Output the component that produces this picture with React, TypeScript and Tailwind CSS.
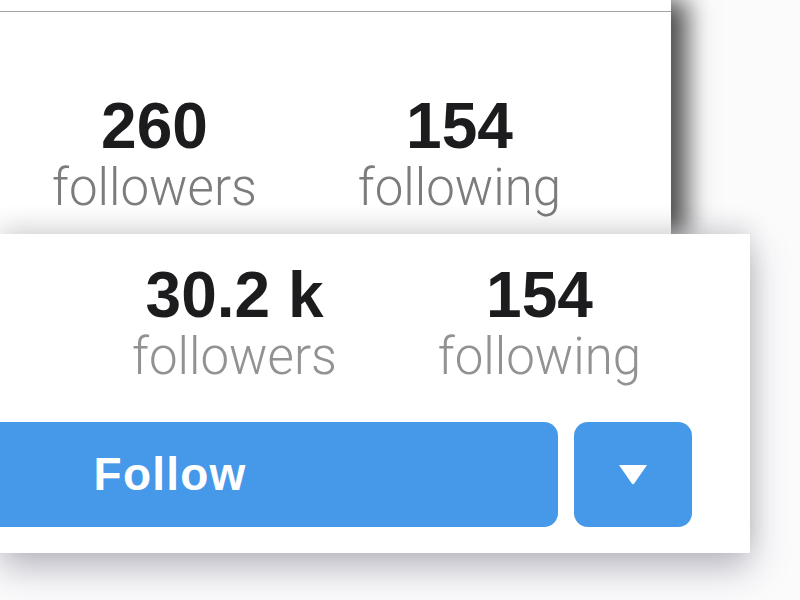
import React from "react";

type Stat = { value: string; label: string };

function StatColumn({ value, label, top }: Stat & { top?: boolean }) {
  return (
    <div className="w-[305px] flex flex-col items-center">
      <div
        className="text-[64px] leading-none font-bold text-[#1c1c1e] whitespace-pre"
        style={{ fontFamily: '"Liberation Sans", Arial, sans-serif' }}
      >
        {value}
      </div>
      <div
        className={
          "text-[51px] leading-none font-light mt-[4px] " +
          (top ? "text-[#7c7c7c]" : "text-[#929292]")
        }
        style={{ fontFamily: "Roboto, sans-serif" }}
      >
        {label}
      </div>
    </div>
  );
}

function CaretDown() {
  return (
    <svg width="30" height="21" viewBox="0 0 30 21" aria-hidden="true">
      <path d="M1 1 H29 L16.2 19.6 Q15 21 13.8 19.6 Z" fill="#ffffff" />
    </svg>
  );
}

export default function App() {
  return (
    <div className="w-[800px] h-[600px] overflow-hidden bg-[#fbfbfc]">
      {/* profile card behind */}
      <div className="w-[671px] h-[234px] bg-white shadow-[16px_0_24px_rgba(0,0,0,0.7)]">
        <div className="h-[12px] border-b border-[#a3a3a3]" />
        <div className="flex pl-[2px] pt-[82px]">
          <StatColumn value="260" label="followers" top />
          <StatColumn value="154" label="following" top />
        </div>
      </div>

      {/* profile card in front */}
      <div className="relative z-10 w-[750px] h-[319px] bg-white shadow-[0_14px_34px_rgba(50,40,70,0.34),0_-10px_22px_rgba(0,0,0,0.09)]">
        <div className="flex pl-[82px] pt-[29px]">
          <StatColumn value="30.2 k" label="followers" />
          <StatColumn value="154" label="following" />
        </div>
        <div className="flex gap-[16px] mt-[40px]">
          <button
            className="-ml-[218px] w-[776px] h-[105px] rounded-[14px] bg-[#4698e8] text-white flex items-center justify-center text-[46px] font-bold tracking-[1.2px]"
            style={{ fontFamily: '"Liberation Sans", Arial, sans-serif' }}
          >
            Follow
          </button>
          <button className="w-[118px] h-[105px] rounded-[14px] bg-[#4698e8] flex items-center justify-center">
            <CaretDown />
          </button>
        </div>
      </div>
    </div>
  );
}
